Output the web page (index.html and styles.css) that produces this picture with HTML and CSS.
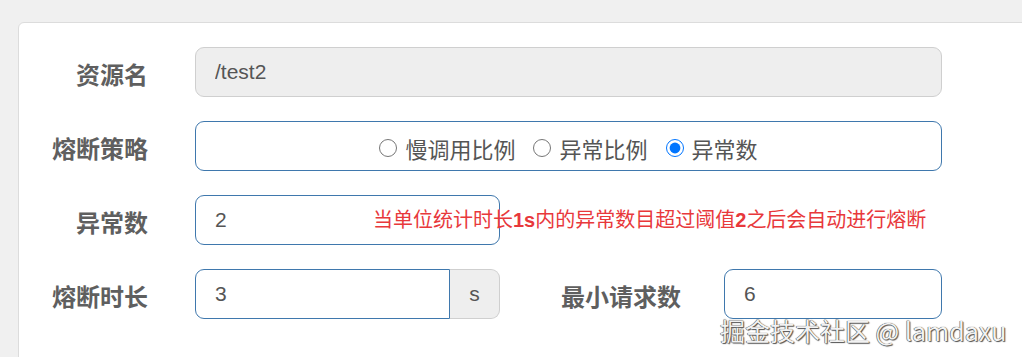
FILE: index.html
```html
<!DOCTYPE html>
<html lang="zh">
<head>
<meta charset="utf-8">
<link rel="stylesheet" href="styles.css">
</head>
<body>
<div class="card">
  <div class="row">
    <label class="label">资源名</label>
    <div class="field field-full">
      <input class="input input-readonly" type="text" value="/test2" readonly>
    </div>
  </div>
  <div class="row">
    <label class="label">熔断策略</label>
    <div class="field field-full">
      <div class="radio-box">
        <label class="radio"><input type="radio" name="s"><span>慢调用比例</span></label>
        <label class="radio"><input type="radio" name="s"><span>异常比例</span></label>
        <label class="radio"><input type="radio" name="s" checked><span>异常数</span></label>
      </div>
    </div>
  </div>
  <div class="row">
    <label class="label">异常数</label>
    <div class="field field-half">
      <input class="input input-active" type="text" value="2">
      <span class="help">当单位统计时长<b class="num">1s</b>内的异常数目超过阈值<b class="num">2</b>之后会自动进行熔断</span>
    </div>
  </div>
  <div class="row">
    <label class="label">熔断时长</label>
    <div class="field field-half group">
      <input class="input input-active group-input" type="text" value="3">
      <span class="addon">s</span>
    </div>
    <label class="label label-second">最小请求数</label>
    <div class="field field-small">
      <input class="input input-active" type="text" value="6">
    </div>
  </div>
</div>
<div class="watermark">掘金技术社区 @ lamdaxu</div>
</body>
</html>
```
FILE: styles.css
```css
html, body {
  margin: 0;
  padding: 0;
  background: #f0f0f0;
  overflow: hidden;
  height: 357px;
}
body {
  font-family: "Liberation Sans", "Noto Sans CJK SC", sans-serif;
  color: #555;
}
.card {
  margin: 22px 0 0 18px;
  width: 1100px;
  height: 400px;
  background: #fff;
  border: 1px solid #dcdcdc;
  border-radius: 6px;
  box-sizing: border-box;
  padding-top: 24px;
  display: flex;
  flex-direction: column;
  gap: 24px;
}
.row {
  display: flex;
  align-items: center;
  height: 50px;
}
.label {
  width: 129px;
  text-align: right;
  font-family: "Noto Sans CJK SC", sans-serif;
  font-weight: 700;
  font-size: 24px;
  color: #5f5f5f;
  margin-right: 47px;
  flex: none;
  padding-top: 2px;
}
.label-second {
  width: 122px;
  margin-left: 61px;
  margin-right: 41px;
  text-align: left;
}
.field {
  position: relative;
  height: 50px;
  flex: none;
}
.field-full { width: 747px; }
.field-half { width: 305px; }
.field-small { width: 218px; }
.input {
  box-sizing: border-box;
  width: 100%;
  height: 50px;
  padding: 0 19px;
  font-family: "Liberation Sans", sans-serif;
  font-size: 21px;
  color: #555;
  border-radius: 9px;
  outline: none;
  margin: 0;
}
.input-readonly {
  background: #eee;
  border: 1px solid #cfcfcf;
}
.input-active {
  background: #fff;
  border: 1px solid #3f78ad;
}
.radio-box {
  box-sizing: border-box;
  height: 50px;
  border: 1px solid #3f78ad;
  border-radius: 9px;
  display: flex;
  align-items: center;
  justify-content: center;
  gap: 18px;
  padding-top: 4px;
}
.radio {
  display: flex;
  align-items: center;
  gap: 8px;
  font-family: "Noto Sans CJK SC", sans-serif;
  font-size: 22px;
  color: #555;
}
.radio input {
  width: 18px;
  height: 18px;
  margin: 0;
}
.help {
  position: absolute;
  left: 178px;
  top: 50%;
  transform: translateY(-55%);
  white-space: nowrap;
  font-family: "Noto Sans CJK SC", sans-serif;
  font-size: 20px;
  color: #e8383b;
}
.num {
  font-family: "Liberation Sans", sans-serif;
  font-weight: 700;
  font-size: 20px;
}
.group {
  display: flex;
}
.group-input {
  width: 255px;
  flex: none;
  border-radius: 9px 0 0 9px;
}
.addon {
  box-sizing: border-box;
  width: 50px;
  height: 50px;
  background: #eee;
  border: 1px solid #cfcfcf;
  border-left: none;
  border-radius: 0 9px 9px 0;
  display: flex;
  align-items: center;
  justify-content: center;
  font-size: 21px;
  color: #555;
}
.watermark {
  position: absolute;
  left: 720px;
  top: 312px;
  font-family: "Noto Sans CJK SC", sans-serif;
  font-size: 25px;
  color: #f2f2f2;
  text-shadow: 0 0 1px #333, 1px 1px 1px #555, -0.5px -0.5px 0.5px #777;
  white-space: nowrap;
}
```
